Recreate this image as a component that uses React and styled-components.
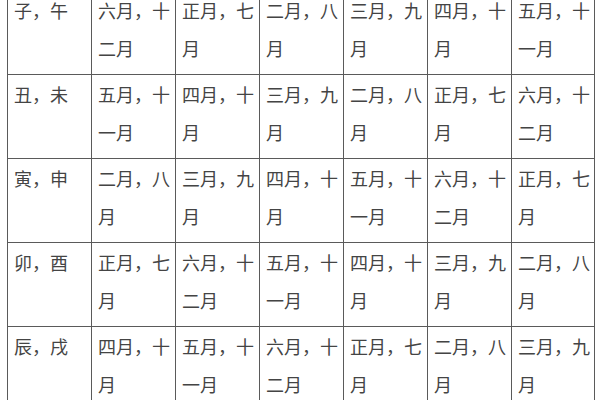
import React from 'react';
import styled, { createGlobalStyle } from 'styled-components';

const GlobalStyle = createGlobalStyle`
    html, body {
        margin: 0;
        padding: 0;
        background: #fff;
        overflow: hidden;
    }
    body {
        font-family: "Noto Sans CJK SC", "Noto Sans", sans-serif;
    }
`;

const Page = styled.div`
    width: 600px;
    height: 400px;
    overflow: hidden;
    background: #fff;
    padding-left: 7px;
    box-sizing: border-box;
`;

const Table = styled.table`
    margin-top: -10px;
    border-collapse: collapse;
    table-layout: fixed;
    width: 587px;
`;

const Cell = styled.td`
    width: ${p => p.$w}px;
    height: 84px;
    box-sizing: border-box;
    border: 1px solid #5a5a5a;
    vertical-align: top;
    padding: 0 4px 0 6px;
    font-size: 18px;
    line-height: 38px;
    color: #444;
    word-break: break-all;
`;

const rows = [
    ['子，午', '六月，十二月', '正月，七月', '二月，八月', '三月，九月', '四月，十月', '五月，十一月'],
    ['丑，未', '五月，十一月', '四月，十月', '三月，九月', '二月，八月', '正月，七月', '六月，十二月'],
    ['寅，申', '二月，八月', '三月，九月', '四月，十月', '五月，十一月', '六月，十二月', '正月，七月'],
    ['卯，酉', '正月，七月', '六月，十二月', '五月，十一月', '四月，十月', '三月，九月', '二月，八月'],
    ['辰，戌', '四月，十月', '五月，十一月', '六月，十二月', '正月，七月', '二月，八月', '三月，九月'],
];

const widths = [84, 84, 84, 84, 84, 84, 83];

export default function App() {
    return (
        <>
            <GlobalStyle />
            <Page>
                <Table>
                    <tbody>
                        {rows.map((row, i) => (
                            <tr key={i}>
                                {row.map((text, j) => (
                                    <Cell key={j} $w={widths[j]}>
                                        {text}
                                    </Cell>
                                ))}
                            </tr>
                        ))}
                    </tbody>
                </Table>
            </Page>
        </>
    );
}
